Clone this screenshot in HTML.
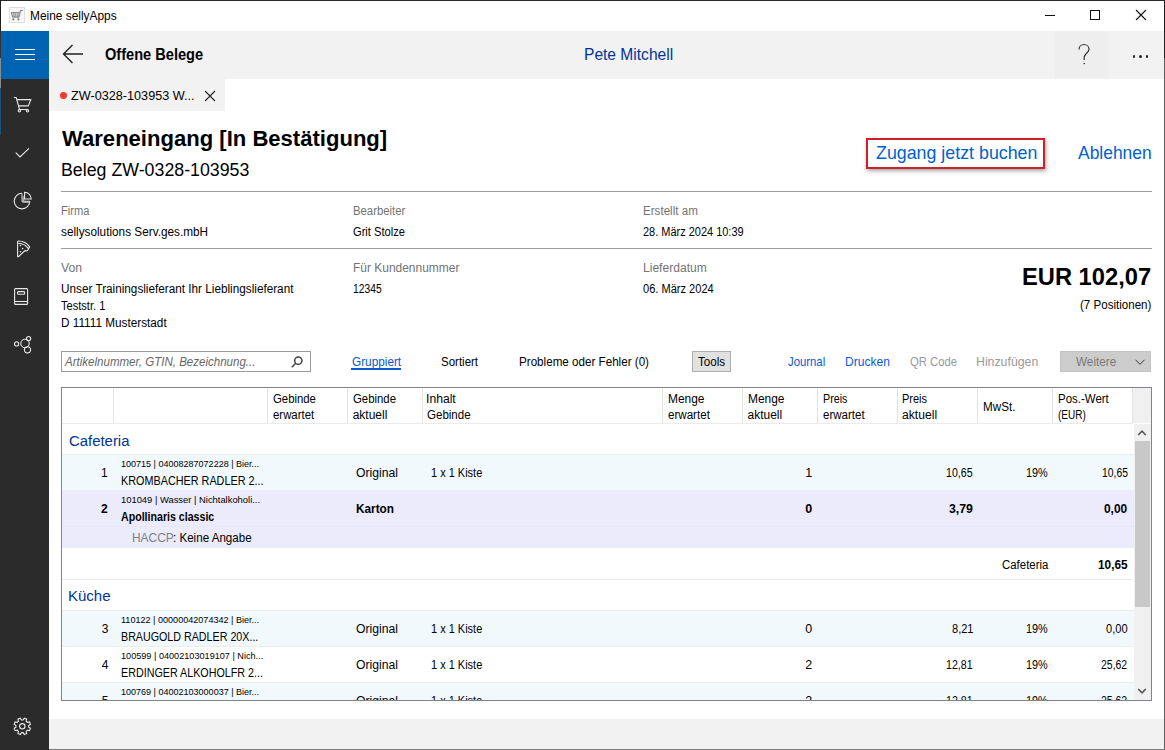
<!DOCTYPE html>
<html><head><meta charset="utf-8">
<style>
*{margin:0;padding:0;box-sizing:border-box}
html,body{width:1165px;height:750px;overflow:hidden;background:#fff}
body{position:relative;font-family:"Liberation Sans",sans-serif}
.a{position:absolute}
.t{position:absolute;white-space:nowrap;transform-origin:0 0}
.clip{position:absolute;left:0;top:0;width:1165px;height:750px;clip-path:inset(424px 31px 50px 62px)}
</style></head><body>
<!-- window border -->
<div class="a" style="left:0;top:0;width:1165px;height:1px;background:#2a2a2a"></div>
<div class="a" style="left:0;top:0;width:1px;height:750px;background:#2b2b2b"></div>
<div class="a" style="left:0;top:0;width:1px;height:31px;background:#1e1e1e"></div>
<div class="a" style="left:0;top:31px;width:1px;height:27px;background:#3a3228"></div>
<div class="a" style="left:0;top:58px;width:1px;height:30px;background:#8a8a8a"></div>
<div class="a" style="left:0;top:88px;width:1px;height:47px;background:#1d4e7a"></div>
<div class="a" style="left:1164px;top:0;width:1px;height:750px;background:#5e5e5e"></div>
<div class="a" style="left:1164px;top:0;width:1px;height:58px;background:#1e1e1e"></div>
<div class="a" style="left:39px;top:749px;width:1126px;height:1px;background:#7a7a7a"></div>
<!-- title bar -->
<div class="a" style="left:9px;top:7px;width:16px;height:16px;background:#f7f7f7;border:1px solid #dedede"></div>
<svg class="a" style="left:0;top:0" width="30" height="30" viewBox="0 0 30 30"><path d="M11 12.5h8.3M11.4 12.5l1.3 4.6h6.2l1.6-6.6h2.4M13.6 12.7l.6 4M15.8 12.7v4M18 12.7l-.4 4M13.3 18.2v2.2M12.2 19.3h2.2M18.4 18.2v2.2M17.3 19.3h2.2" fill="none" stroke="#8a8a8a" stroke-width="1.2"/></svg>
<!-- window controls -->
<div class="a" style="left:1045px;top:15px;width:10px;height:1px;background:#111"></div>
<div class="a" style="left:1090px;top:10px;width:10px;height:10px;border:1px solid #111"></div>
<svg class="a" style="left:1135px;top:9px" width="12" height="12" viewBox="0 0 12 12"><path d="M1 1L11 11M11 1L1 11" stroke="#111" stroke-width="1.1"/></svg>
<!-- header bar -->
<div class="a" style="left:49px;top:31px;width:1115px;height:48px;background:#f2f2f2"></div>
<div class="a" style="left:1054px;top:31px;width:55px;height:48px;background:#eeeeee"></div>
<!-- sidebar -->
<div class="a" style="left:1px;top:31px;width:48px;height:719px;background:#2b2b2b"></div>
<div class="a" style="left:1px;top:31px;width:48px;height:48px;background:#0063b1"></div>
<div class="a" style="left:15px;top:49px;width:20px;height:1px;background:#fff"></div>
<div class="a" style="left:15px;top:54px;width:20px;height:1px;background:#fff"></div>
<div class="a" style="left:15px;top:59px;width:20px;height:1px;background:#fff"></div>
<!-- back arrow -->
<svg class="a" style="left:62px;top:44px" width="22" height="20" viewBox="0 0 22 20"><path d="M1.5 10H21M10.5 1L1.5 10L10.5 19" fill="none" stroke="#222" stroke-width="1.4"/></svg>
<!-- help & more -->
<svg class="a" style="left:1076px;top:43px" width="16" height="23" viewBox="0 0 16 23"><path d="M3 6.5C3 3.5 5.3 1.5 8 1.5S13 3.5 13 6.3C13 9.2 9 10.5 8.2 14V17" fill="none" stroke="#333" stroke-width="1.2"/><circle cx="8.2" cy="20.5" r="0.8" fill="#333"/></svg>
<div class="a" style="left:1132.6px;top:55.2px;width:2.6px;height:2.6px;border-radius:2px;background:#222"></div>
<div class="a" style="left:1139.1px;top:55.2px;width:2.6px;height:2.6px;border-radius:2px;background:#222"></div>
<div class="a" style="left:1145.7px;top:55.2px;width:2.6px;height:2.6px;border-radius:2px;background:#222"></div>
<!-- tab -->
<div class="a" style="left:49px;top:79px;width:176px;height:32px;background:#f2f2f2"></div>
<div class="a" style="left:60px;top:92px;width:7px;height:7px;border-radius:50%;background:#f03a2e"></div>
<svg class="a" style="left:204px;top:90px" width="12" height="12" viewBox="0 0 12 12"><path d="M1 1L11 11M11 1L1 11" stroke="#222" stroke-width="1.1"/></svg>
<!-- sidebar icons -->
<svg class="a" style="left:0;top:0" width="49" height="750" viewBox="0 0 49 750" fill="none" stroke="#e8e8e8" stroke-width="1.1">
  <path d="M13.8 97.5h2.4l3.3 12h8.3"/><path d="M16.8 99.6h14l-2.5 6.3h-9.6"/><circle cx="19.4" cy="110.8" r="1.2"/><circle cx="27.5" cy="110.8" r="1.2"/>
  <path d="M15.7 152.7l4.3 4.3 9-8.7"/>
  <path d="M23 194.3h-1" stroke="none"/>
  <path d="M22.5 196.2h1.8v4.9h5.6v1.8h-7.4z" fill="#a0a0a0" stroke="none"/>
  <path d="M22 193.3A7.8 7.8 0 1 0 29.8 201.2"/><path d="M22 193.3V201.2H29.8" stroke="#c8c8c8"/>
  <path d="M24.6 192.2V199H31.2A6.8 6.8 0 0 0 24.6 192.2Z"/>
  <path d="M18.2 241C17.6 241 17.6 241.5 17.6 242V256.2C17.6 256.8 18.2 257 18.7 256.5L25 250.5C26.3 251.5 28.3 250.7 28.3 249.1L29.6 246.9C27.3 243.2 23 241 18.2 241Z"/><path d="M18.3 243.2C22.5 243.3 26.2 245.4 28.3 248.6"/>
  <circle cx="20.5" cy="245.5" r=".8" fill="#e8e8e8" stroke="none"/><circle cx="22.6" cy="248.5" r=".8" fill="#e8e8e8" stroke="none"/><circle cx="20.5" cy="251.7" r=".8" fill="#e8e8e8" stroke="none"/>
  <rect x="14.6" y="288.6" width="13" height="15.8" rx="1"/><path d="M14.6 301.5h13"/><rect x="17.6" y="291.6" width="7" height="2.6" rx=".8"/>
  <circle cx="16.6" cy="343.9" r="2.1"/><circle cx="25" cy="343.5" r="4.2"/><circle cx="28.6" cy="338.6" r="2.1"/><circle cx="27.5" cy="349.8" r="3.1"/>
  <path d="M23.14 719.95 L24.26 718.13 L26.69 719.14 L26.20 721.22 L27.38 722.40 L29.46 721.91 L30.47 724.34 L28.65 725.46 L28.65 727.14 L30.47 728.26 L29.46 730.69 L27.38 730.20 L26.20 731.38 L26.69 733.46 L24.26 734.47 L23.14 732.65 L21.46 732.65 L20.34 734.47 L17.91 733.46 L18.40 731.38 L17.22 730.20 L15.14 730.69 L14.13 728.26 L15.95 727.14 L15.95 725.46 L14.13 724.34 L15.14 721.91 L17.22 722.40 L18.40 721.22 L17.91 719.14 L20.34 718.13 L21.46 719.95Z"/><circle cx="22.3" cy="726.3" r="2.7"/>
</svg>
<!-- bottom strip -->
<div class="a" style="left:49px;top:719px;width:1115px;height:30px;background:#f2f2f2"></div>
<!-- dividers -->
<div class="a" style="left:61px;top:191px;width:1091px;height:1px;background:#a0a0a0"></div>
<div class="a" style="left:61px;top:248px;width:1091px;height:1px;background:#a0a0a0"></div>
<!-- red box -->
<div class="a" style="left:866px;top:138px;width:179px;height:31px;border:2px solid #cf1f2a;box-shadow:1px 2px 4px rgba(0,0,0,.35)"></div>
<!-- search -->
<div class="a" style="left:61px;top:351px;width:250px;height:21px;border:1px solid #9b9b9b"></div>
<svg class="a" style="left:290px;top:355px" width="14" height="14" viewBox="0 0 14 14" fill="none" stroke="#444" stroke-width="1.5"><circle cx="8.3" cy="5.7" r="3.6"/><path d="M5.7 8.3L1.8 12.2"/></svg>
<div class="a" style="left:351px;top:368px;width:50px;height:2px;background:#0a5ad0"></div>
<div class="a" style="left:692px;top:351px;width:39px;height:21px;background:#e1e1e1;border:1px solid #adadad"></div>
<div class="a" style="left:1060px;top:351px;width:91px;height:21px;background:#cccccc;border:1px solid #c4c4c4"></div>
<svg class="a" style="left:1134px;top:358px" width="12" height="8" viewBox="0 0 12 8"><path d="M1.5 1.8l4.5 4.5 4.5-4.5" fill="none" stroke="#333" stroke-width="1"/></svg>
<!-- table -->
<div class="a" style="left:61px;top:387px;width:1091px;height:314px;border:1px solid #7f848c"></div>
<div class="a" style="left:1133px;top:388px;width:18px;height:35px;background:#f0f0f0"></div>
<div class="a" style="left:62px;top:423px;width:1071px;height:1px;background:#ebebeb"></div>
<div class="a" style="left:113px;top:388px;width:1px;height:35px;background:#e3e3e3"></div>
<div class="a" style="left:267px;top:388px;width:1px;height:35px;background:#e3e3e3"></div>
<div class="a" style="left:347px;top:388px;width:1px;height:35px;background:#e3e3e3"></div>
<div class="a" style="left:422px;top:388px;width:1px;height:35px;background:#e3e3e3"></div>
<div class="a" style="left:662px;top:388px;width:1px;height:35px;background:#e3e3e3"></div>
<div class="a" style="left:742px;top:388px;width:1px;height:35px;background:#e3e3e3"></div>
<div class="a" style="left:817px;top:388px;width:1px;height:35px;background:#e3e3e3"></div>
<div class="a" style="left:897px;top:388px;width:1px;height:35px;background:#e3e3e3"></div>
<div class="a" style="left:977px;top:388px;width:1px;height:35px;background:#e3e3e3"></div>
<div class="a" style="left:1052px;top:388px;width:1px;height:35px;background:#e3e3e3"></div>
<div class="a" style="left:1132px;top:388px;width:1px;height:35px;background:#e3e3e3"></div>
<!-- rows -->
<div class="a" style="left:62px;top:454px;width:1072px;height:1px;background:#ececec"></div>
<div class="a" style="left:62px;top:455px;width:1072px;height:35px;background:#f2f9fd"></div>
<div class="a" style="left:62px;top:490px;width:1072px;height:58px;background:#ebebfb"></div>
<div class="a" style="left:62px;top:526px;width:1072px;height:1px;background:#e6e6f4"></div>
<div class="a" style="left:62px;top:579px;width:1072px;height:1px;background:#ebebeb"></div>
<div class="a" style="left:62px;top:610px;width:1072px;height:1px;background:#ececec"></div>
<div class="a" style="left:62px;top:611px;width:1072px;height:35px;background:#f2f9fd"></div>
<div class="a" style="left:62px;top:646px;width:1072px;height:1px;background:#ececec"></div>
<div class="a" style="left:62px;top:682px;width:1072px;height:1px;background:#ececec"></div>
<div class="a" style="left:62px;top:683px;width:1072px;height:17px;background:#f2f9fd"></div>
<!-- scrollbar -->
<div class="a" style="left:1134px;top:424px;width:17px;height:276px;background:#f0f0f0"></div>
<div class="a" style="left:1135px;top:441px;width:15px;height:166px;background:#c8c8c8"></div>
<svg class="a" style="left:1137px;top:429px" width="10" height="8" viewBox="0 0 10 8"><path d="M1.2 6L5 2.2 8.8 6" fill="none" stroke="#555" stroke-width="1.6"/></svg>
<svg class="a" style="left:1137px;top:687px" width="10" height="8" viewBox="0 0 10 8"><path d="M1.2 2L5 5.8 8.8 2" fill="none" stroke="#555" stroke-width="1.6"/></svg>
<div class="t" style="left:29.55px;top:9px;font-size:12.5px;line-height:14px;color:#000;transform:scaleX(0.9525);">Meine sellyApps</div>
<div class="t" style="left:104.60px;top:46px;font-size:16px;line-height:17px;color:#000;font-weight:700;transform:scaleX(0.9119);">Offene Belege</div>
<div class="t" style="left:583.93px;top:46px;font-size:16px;line-height:17px;color:#003399;transform:scaleX(0.9729);">Pete Mitchell</div>
<div class="t" style="left:71.00px;top:88px;font-size:13px;line-height:15px;color:#000;transform:scaleX(0.9737);">ZW-0328-103953 W...</div>
<div class="t" style="left:62.00px;top:127px;font-size:21.5px;line-height:24px;color:#000;font-weight:700;transform:scaleX(1.0261);">Wareneingang [In Bestätigung]</div>
<div class="t" style="left:60.98px;top:160px;font-size:17.5px;line-height:20px;color:#000;transform:scaleX(1.0155);">Beleg ZW-0328-103953</div>
<div class="t" style="left:875.80px;top:142px;font-size:19px;line-height:21px;color:#005FD0;transform:scaleX(0.9376);">Zugang jetzt buchen</div>
<div class="t" style="left:1078.00px;top:142px;font-size:19px;line-height:21px;color:#005FD0;transform:scaleX(0.9181);">Ablehnen</div>
<div class="t" style="left:61.40px;top:204px;font-size:12px;line-height:14px;color:#737373;transform:scaleX(0.9229);">Firma</div>
<div class="t" style="left:61.40px;top:225px;font-size:12px;line-height:14px;color:#000;transform:scaleX(0.9814);">sellysolutions Serv.ges.mbH</div>
<div class="t" style="left:352.60px;top:204px;font-size:12px;line-height:14px;color:#737373;transform:scaleX(0.9446);">Bearbeiter</div>
<div class="t" style="left:352.60px;top:225px;font-size:12px;line-height:14px;color:#000;transform:scaleX(0.9283);">Grit Stolze</div>
<div class="t" style="left:642.80px;top:204px;font-size:12px;line-height:14px;color:#737373;transform:scaleX(0.9668);">Erstellt am</div>
<div class="t" style="left:642.80px;top:225px;font-size:12px;line-height:14px;color:#000;transform:scaleX(0.9139);">28. März 2024 10:39</div>
<div class="t" style="left:61.40px;top:261px;font-size:12px;line-height:14px;color:#737373;transform:scaleX(1.0192);">Von</div>
<div class="t" style="left:61.40px;top:282px;font-size:12px;line-height:14px;color:#000;transform:scaleX(0.9789);">Unser Trainingslieferant Ihr Lieblingslieferant</div>
<div class="t" style="left:61.40px;top:299px;font-size:12px;line-height:14px;color:#000;transform:scaleX(0.9226);">Teststr. 1</div>
<div class="t" style="left:61.40px;top:316px;font-size:12px;line-height:14px;color:#000;transform:scaleX(0.9798);">D 11111 Musterstadt</div>
<div class="t" style="left:352.60px;top:261px;font-size:12px;line-height:14px;color:#737373;transform:scaleX(0.9970);">Für Kundennummer</div>
<div class="t" style="left:352.60px;top:282px;font-size:12px;line-height:14px;color:#000;transform:scaleX(0.8577);">12345</div>
<div class="t" style="left:642.80px;top:261px;font-size:12px;line-height:14px;color:#737373;transform:scaleX(1.0067);">Lieferdatum</div>
<div class="t" style="left:642.80px;top:282px;font-size:12px;line-height:14px;color:#000;transform:scaleX(0.9216);">06. März 2024</div>
<div class="t" style="left:1022.33px;top:263px;font-size:24.5px;line-height:27px;color:#000;font-weight:700;transform:scaleX(0.9671);">EUR 102,07</div>
<div class="t" style="left:1079.80px;top:298px;font-size:12.5px;line-height:14px;color:#000;transform:scaleX(0.9251);">(7 Positionen)</div>
<div class="t" style="left:64.89px;top:354px;font-size:13px;line-height:15px;color:#666;font-style:italic;transform:scaleX(0.8876);">Artikelnummer, GTIN, Bezeichnung...</div>
<div class="t" style="left:351.50px;top:354px;font-size:13px;line-height:15px;color:#0A58D0;transform:scaleX(0.9070);">Gruppiert</div>
<div class="t" style="left:441.30px;top:354px;font-size:13px;line-height:15px;color:#000;transform:scaleX(0.8844);">Sortiert</div>
<div class="t" style="left:518.50px;top:354px;font-size:13px;line-height:15px;color:#000;transform:scaleX(0.8951);">Probleme oder Fehler (0)</div>
<div class="t" style="left:697.50px;top:354px;font-size:13px;line-height:15px;color:#000;transform:scaleX(0.8915);">Tools</div>
<div class="t" style="left:788.30px;top:354px;font-size:13px;line-height:15px;color:#0A58D0;transform:scaleX(0.8725);">Journal</div>
<div class="t" style="left:845.07px;top:354px;font-size:13px;line-height:15px;color:#0A58D0;transform:scaleX(0.9263);">Drucken</div>
<div class="t" style="left:909.90px;top:354px;font-size:13px;line-height:15px;color:#999;transform:scaleX(0.8692);">QR Code</div>
<div class="t" style="left:976.35px;top:354px;font-size:13px;line-height:15px;color:#999;transform:scaleX(0.9467);">Hinzufügen</div>
<div class="t" style="left:1076.00px;top:354px;font-size:13px;line-height:15px;color:#7a7a7a;transform:scaleX(0.9024);">Weitere</div>
<div class="t" style="left:272.80px;top:392px;font-size:12px;line-height:14px;color:#000;transform:scaleX(0.9454);">Gebinde</div>
<div class="t" style="left:272.80px;top:408px;font-size:12px;line-height:14px;color:#000;transform:scaleX(0.9497);">erwartet</div>
<div class="t" style="left:352.70px;top:392px;font-size:12px;line-height:14px;color:#000;transform:scaleX(0.9476);">Gebinde</div>
<div class="t" style="left:352.70px;top:408px;font-size:12px;line-height:14px;color:#000;">aktuell</div>
<div class="t" style="left:426.29px;top:392px;font-size:12px;line-height:14px;color:#000;transform:scaleX(1.0130);">Inhalt</div>
<div class="t" style="left:427.30px;top:408px;font-size:12px;line-height:14px;color:#000;transform:scaleX(0.9607);">Gebinde</div>
<div class="t" style="left:667.60px;top:392px;font-size:12px;line-height:14px;color:#000;transform:scaleX(0.9941);">Menge</div>
<div class="t" style="left:667.60px;top:408px;font-size:12px;line-height:14px;color:#000;transform:scaleX(0.9656);">erwartet</div>
<div class="t" style="left:747.50px;top:392px;font-size:12px;line-height:14px;color:#000;transform:scaleX(0.9941);">Menge</div>
<div class="t" style="left:747.50px;top:408px;font-size:12px;line-height:14px;color:#000;">aktuell</div>
<div class="t" style="left:822.60px;top:392px;font-size:12px;line-height:14px;color:#000;transform:scaleX(0.8925);">Preis</div>
<div class="t" style="left:822.60px;top:408px;font-size:12px;line-height:14px;color:#000;transform:scaleX(0.9611);">erwartet</div>
<div class="t" style="left:902.30px;top:392px;font-size:12px;line-height:14px;color:#000;transform:scaleX(0.9144);">Preis</div>
<div class="t" style="left:902.30px;top:408px;font-size:12px;line-height:14px;color:#000;transform:scaleX(1.0111);">aktuell</div>
<div class="t" style="left:982.50px;top:400px;font-size:12px;line-height:14px;color:#000;transform:scaleX(0.9727);">MwSt.</div>
<div class="t" style="left:1057.60px;top:392px;font-size:12px;line-height:14px;color:#000;transform:scaleX(0.9556);">Pos.-Wert</div>
<div class="t" style="left:1057.60px;top:408px;font-size:12px;line-height:14px;color:#000;transform:scaleX(0.8370);">(EUR)</div>
<div class="t" style="left:68.80px;top:432px;font-size:15.5px;line-height:17px;color:#003399;transform:scaleX(0.9609);">Cafeteria</div>
<div class="t" style="left:67.53px;top:587px;font-size:15.5px;line-height:17px;color:#003399;transform:scaleX(0.9686);">Küche</div>
<div class="t" style="left:132.38px;top:530px;font-size:13px;line-height:15px;color:#808080;transform:scaleX(0.9171);">HACCP</div>
<div class="t" style="left:172.61px;top:530px;font-size:13px;line-height:15px;color:#000;transform:scaleX(0.8919);">: Keine Angabe</div>
<div class="t" style="left:1001.60px;top:558px;font-size:12.5px;line-height:14px;color:#000;transform:scaleX(0.9140);">Cafeteria</div>
<div class="t" style="left:1098.00px;top:558px;font-size:12.5px;line-height:14px;color:#000;font-weight:700;transform:scaleX(0.9448);">10,65</div>
<div class="clip">
<div class="t" style="left:101.00px;top:466px;font-size:12px;line-height:14px;color:#000;">1</div>
<div class="t" style="left:121.40px;top:458px;font-size:9.5px;line-height:11px;color:#000;transform:scaleX(0.9495);">100715 | 04008287072228 | Bier...</div>
<div class="t" style="left:120.57px;top:473px;font-size:13px;line-height:15px;color:#000;transform:scaleX(0.8326);">KROMBACHER RADLER 2...</div>
<div class="t" style="left:355.50px;top:466px;font-size:12.5px;line-height:14px;color:#000;transform:scaleX(0.9741);">Original</div>
<div class="t" style="left:430.70px;top:466px;font-size:12.5px;line-height:14px;color:#000;transform:scaleX(0.8783);">1 x 1 Kiste</div>
<div class="t" style="left:805.20px;top:466px;font-size:12.5px;line-height:14px;color:#000;">1</div>
<div class="t" style="left:946.40px;top:466px;font-size:12.5px;line-height:14px;color:#000;transform:scaleX(0.8491);">10,65</div>
<div class="t" style="left:1026.40px;top:466px;font-size:12.5px;line-height:14px;color:#000;transform:scaleX(0.8673);">19%</div>
<div class="t" style="left:1101.60px;top:466px;font-size:12.5px;line-height:14px;color:#000;transform:scaleX(0.8299);">10,65</div>
<div class="t" style="left:101.00px;top:502px;font-size:12px;line-height:14px;color:#000;font-weight:700;">2</div>
<div class="t" style="left:121.40px;top:494px;font-size:9.5px;line-height:11px;color:#000;transform:scaleX(0.9873);">101049 | Wasser | Nichtalkoholi...</div>
<div class="t" style="left:121.40px;top:509px;font-size:13px;line-height:15px;color:#000;font-weight:700;transform:scaleX(0.8171);">Apollinaris classic</div>
<div class="t" style="left:355.50px;top:502px;font-size:12.5px;line-height:14px;color:#000;font-weight:700;transform:scaleX(0.9435);">Karton</div>
<div class="t" style="left:805.20px;top:502px;font-size:12.5px;line-height:14px;color:#000;font-weight:700;">0</div>
<div class="t" style="left:949.00px;top:502px;font-size:12.5px;line-height:14px;color:#000;font-weight:700;transform:scaleX(0.9845);">3,79</div>
<div class="t" style="left:1104.40px;top:502px;font-size:12.5px;line-height:14px;color:#000;font-weight:700;transform:scaleX(0.9517);">0,00</div>
<div class="t" style="left:101.70px;top:622px;font-size:12px;line-height:14px;color:#000;">3</div>
<div class="t" style="left:121.40px;top:614px;font-size:9.5px;line-height:11px;color:#000;transform:scaleX(0.9542);">110122 | 00000042074342 | Bier...</div>
<div class="t" style="left:120.58px;top:629px;font-size:13px;line-height:15px;color:#000;transform:scaleX(0.8229);">BRAUGOLD RADLER 20X...</div>
<div class="t" style="left:355.50px;top:622px;font-size:12.5px;line-height:14px;color:#000;transform:scaleX(0.9741);">Original</div>
<div class="t" style="left:430.70px;top:622px;font-size:12.5px;line-height:14px;color:#000;transform:scaleX(0.8783);">1 x 1 Kiste</div>
<div class="t" style="left:805.20px;top:622px;font-size:12.5px;line-height:14px;color:#000;">0</div>
<div class="t" style="left:951.50px;top:622px;font-size:12.5px;line-height:14px;color:#000;transform:scaleX(0.8820);">8,21</div>
<div class="t" style="left:1026.40px;top:622px;font-size:12.5px;line-height:14px;color:#000;transform:scaleX(0.8673);">19%</div>
<div class="t" style="left:1106.00px;top:622px;font-size:12.5px;line-height:14px;color:#000;transform:scaleX(0.8861);">0,00</div>
<div class="t" style="left:101.70px;top:658px;font-size:12px;line-height:14px;color:#000;">4</div>
<div class="t" style="left:121.40px;top:650px;font-size:9.5px;line-height:11px;color:#000;transform:scaleX(0.9604);">100599 | 04002103019107 | Nich...</div>
<div class="t" style="left:120.57px;top:665px;font-size:13px;line-height:15px;color:#000;transform:scaleX(0.8255);">ERDINGER ALKOHOLFR 2...</div>
<div class="t" style="left:355.50px;top:658px;font-size:12.5px;line-height:14px;color:#000;transform:scaleX(0.9741);">Original</div>
<div class="t" style="left:430.70px;top:658px;font-size:12.5px;line-height:14px;color:#000;transform:scaleX(0.8783);">1 x 1 Kiste</div>
<div class="t" style="left:805.20px;top:658px;font-size:12.5px;line-height:14px;color:#000;">2</div>
<div class="t" style="left:946.30px;top:658px;font-size:12.5px;line-height:14px;color:#000;transform:scaleX(0.8523);">12,81</div>
<div class="t" style="left:1026.40px;top:658px;font-size:12.5px;line-height:14px;color:#000;transform:scaleX(0.8673);">19%</div>
<div class="t" style="left:1101.40px;top:658px;font-size:12.5px;line-height:14px;color:#000;transform:scaleX(0.8363);">25,62</div>
<div class="t" style="left:101.70px;top:694px;font-size:12px;line-height:14px;color:#000;">5</div>
<div class="t" style="left:121.40px;top:686px;font-size:9.5px;line-height:11px;color:#000;transform:scaleX(0.9495);">100769 | 04002103000037 | Bier...</div>
<div class="t" style="left:120.57px;top:701px;font-size:13px;line-height:15px;color:#000;transform:scaleX(0.8255);">ERDINGER ALKOHOLFR 2...</div>
<div class="t" style="left:355.50px;top:694px;font-size:12.5px;line-height:14px;color:#000;transform:scaleX(0.9741);">Original</div>
<div class="t" style="left:430.70px;top:694px;font-size:12.5px;line-height:14px;color:#000;transform:scaleX(0.8783);">1 x 1 Kiste</div>
<div class="t" style="left:805.20px;top:694px;font-size:12.5px;line-height:14px;color:#000;">2</div>
<div class="t" style="left:946.30px;top:694px;font-size:12.5px;line-height:14px;color:#000;transform:scaleX(0.8523);">12,81</div>
<div class="t" style="left:1026.40px;top:694px;font-size:12.5px;line-height:14px;color:#000;transform:scaleX(0.8673);">19%</div>
<div class="t" style="left:1101.40px;top:694px;font-size:12.5px;line-height:14px;color:#000;transform:scaleX(0.8363);">25,62</div>
</div>
</body></html>
